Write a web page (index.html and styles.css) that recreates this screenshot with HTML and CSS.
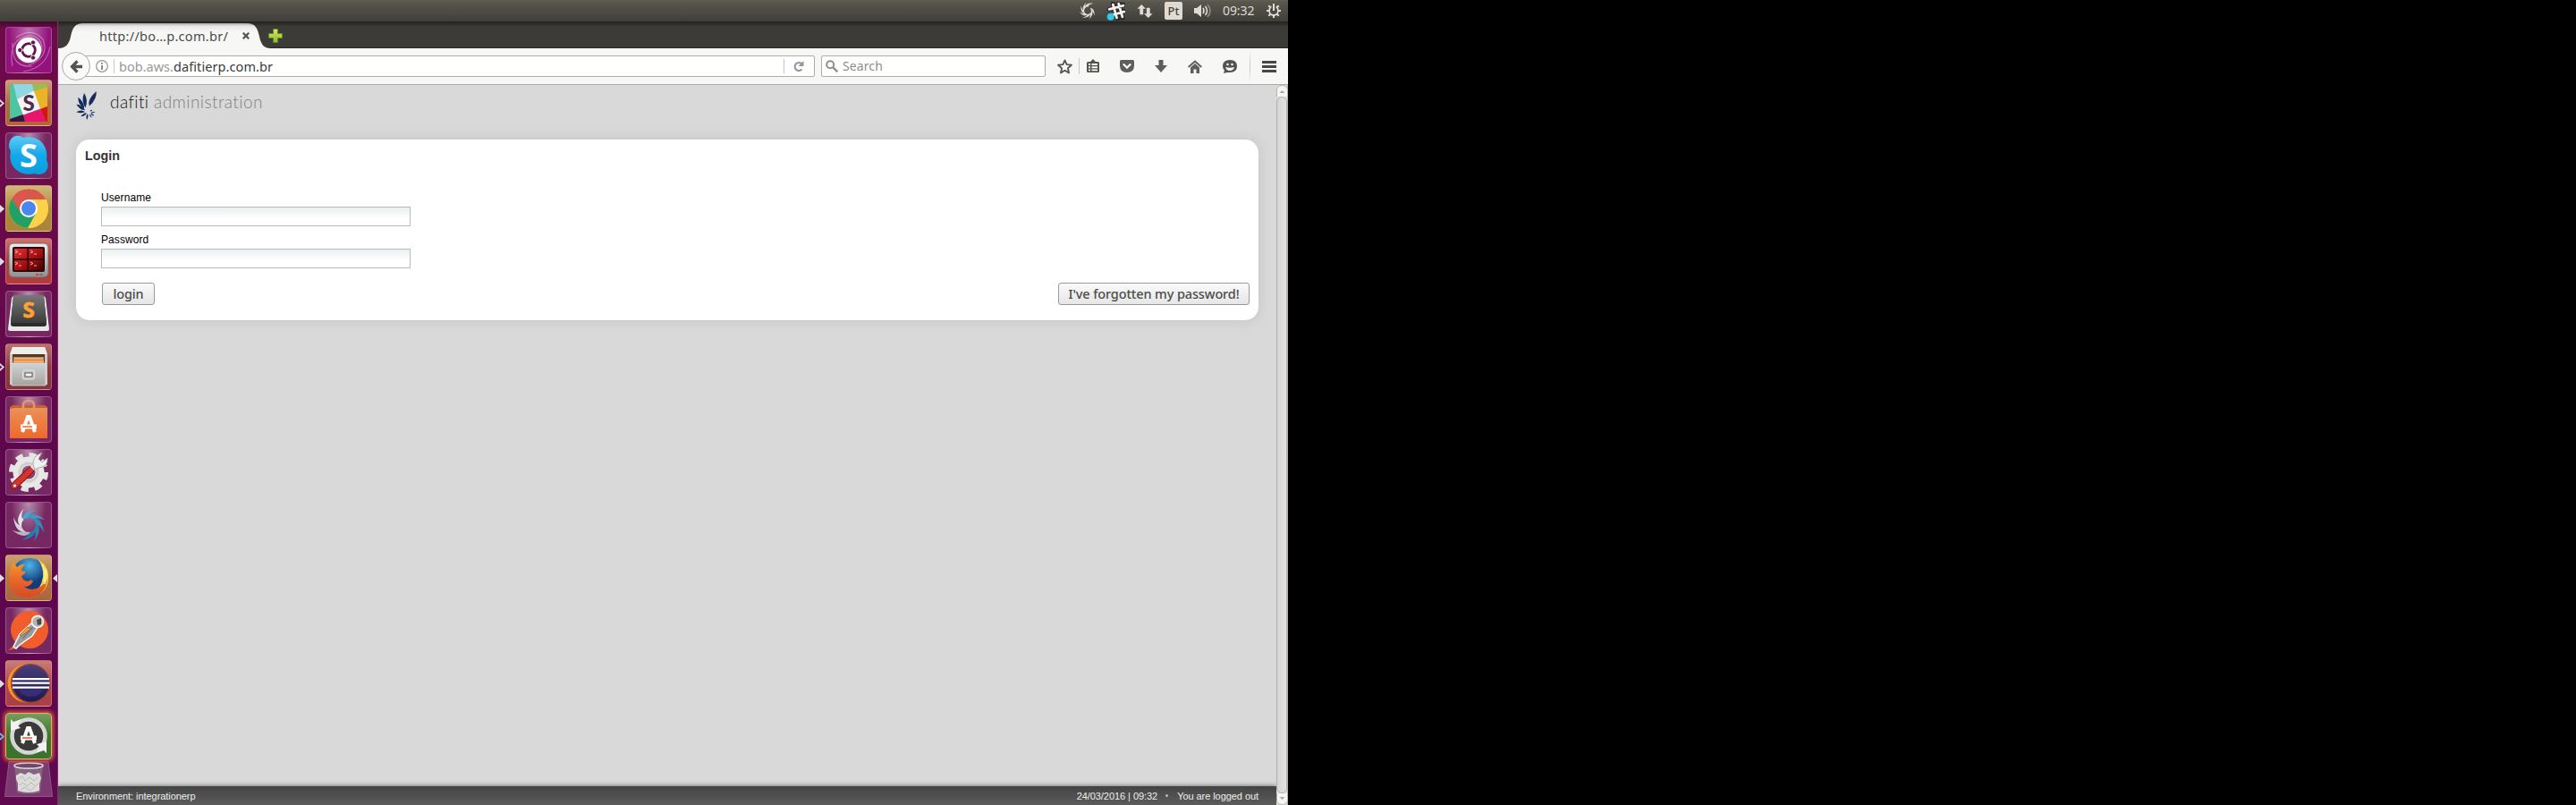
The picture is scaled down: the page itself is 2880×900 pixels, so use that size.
FILE: index.html
```html
<!DOCTYPE html>
<html lang="en">
<head>
<meta charset="utf-8">
<title>dafiti administration</title>
<link rel="stylesheet" href="styles.css">
</head>
<body>
<svg class="defs" width="0" height="0">
  <defs>
    <linearGradient id="skype" x2="0" y2="1"><stop offset="0" stop-color="#63c9f3"/><stop offset=".5" stop-color="#12a9ea"/><stop offset="1" stop-color="#0a9fdf"/></linearGradient>
    <linearGradient id="metal" x2="0" y2="1"><stop offset="0" stop-color="#ececec"/><stop offset="1" stop-color="#8f8f8f"/></linearGradient>
    <linearGradient id="drawer" x2="0" y2="1"><stop offset="0" stop-color="#d2d2d0"/><stop offset="1" stop-color="#a3a3a1"/></linearGradient>
    <linearGradient id="key" x2="0" y2="1"><stop offset="0" stop-color="#777"/><stop offset="1" stop-color="#3c3c3c"/></linearGradient>
    <linearGradient id="bag" x2="0" y2="1"><stop offset="0" stop-color="#e8925a"/><stop offset="1" stop-color="#f0682a"/></linearGradient>
    <linearGradient id="term" x2="1" y2="1"><stop offset="0" stop-color="#e0302f"/><stop offset=".55" stop-color="#a80d10"/><stop offset="1" stop-color="#3c0304"/></linearGradient>
    <radialGradient id="globe" cx=".5" cy=".2"><stop offset="0" stop-color="#4db4e6"/><stop offset="1" stop-color="#123a7c"/></radialGradient>
    <linearGradient id="fox" x2="0" y2="1"><stop offset="0" stop-color="#f39a2a"/><stop offset=".5" stop-color="#e8682a"/><stop offset="1" stop-color="#d64a25"/></linearGradient>
    <linearGradient id="ecl" x2="0" y2="1"><stop offset="0" stop-color="#473d7a"/><stop offset="1" stop-color="#1f1a4b"/></linearGradient>
    <linearGradient id="plus" x2="0" y2="1"><stop offset="0" stop-color="#dbe66a"/><stop offset="1" stop-color="#8fb72b"/></linearGradient>
    <linearGradient id="tabg" x2="0" y2="1"><stop offset="0" stop-color="#a8a7a5"/><stop offset=".12" stop-color="#e8e8e7"/><stop offset=".35" stop-color="#f7f7f5"/><stop offset="1" stop-color="#f7f7f5"/></linearGradient>
    <path id="vane" d="M-7-4Q-9-15 9-17Q-1-13 0-8Q-4-8-7-4z"/>
  </defs>
</svg>
<div class="desktop">
  <header class="panel">
    <svg class="ind swirl" viewBox="-18 -19 36 38"><g fill="#dfdbd2"><use href="#vane" transform="scale(1.1) rotate(10)"/><use href="#vane" transform="rotate(-35)"/><use href="#vane" transform="rotate(-80)"/><use href="#vane" transform="rotate(-125)"/><use href="#vane" transform="rotate(-170)"/><use href="#vane" transform="rotate(-215)"/><use href="#vane" transform="rotate(-260)"/></g></svg>
    <svg class="ind hash" viewBox="0 0 20 20"><g stroke="#2c2b28" stroke-width="5" stroke-linecap="round"><path d="M7 2l5 16M13 1l4 16M3 8l15-5M5 15l14-5"/></g><g stroke="#f5f4f2" stroke-width="2.600" stroke-linecap="round"><path d="M7 3l4 14M13 2l4 14M3 8l15-4M5 14.500l14-4"/></g><circle cx="4.500" cy="16" r="3.800" fill="#30c8ef"/></svg>
    <svg class="ind updown" viewBox="0 0 18 18"><path fill="#dfdbd2" d="M5 1l5 5H7v7H3V6H0zM13 17l-5-5h3V5h4v7h3z"/></svg>
    <span class="kbd">Pt</span>
    <svg class="ind vol" viewBox="0 0 20 18"><path fill="#dfdbd2" d="M0 6h3l5-4v14l-5-4H0z"/><g fill="none" stroke-width="1.600"><path stroke="#dfdbd2" d="M10 6q2 3 0 6M12.500 4q4 5 0 10"/><path stroke="#8f8d85" d="M15 2q6 7 0 14"/></g></svg>
    <span class="clock">09:32</span>
    <svg class="ind gear" viewBox="0 0 16 16"><circle cx="8" cy="8" r="5" fill="none" stroke="#dfdbd2" stroke-width="1.800"/><path stroke="#dfdbd2" stroke-width="2" d="M0 8h3M13 8h3M8 13v3M2.300 2.300l2.200 2.200M11.500 4.500l2.200-2.200M2.300 13.700l2.200-2.200M11.500 11.500l2.200 2.200"/><path stroke="#504e47" stroke-width="5" d="M8 1v6"/><path stroke="#dfdbd2" stroke-width="2" d="M8 0v8"/></svg>
  </header>
  <div class="work">
    <nav class="launcher">
      <div class="tile ubuntu"><svg viewBox="0 0 52 52"><g fill="none" stroke="#fff" stroke-width="1.200" opacity=".35"><path d="M8 44Q2 14 26 10Q42 10 41 28M12 12Q30 0 42 14Q50 34 26 43M20 50Q46 46 50 22M8 18Q6 46 30 44"/></g><circle cx="26" cy="26" r="14.300" fill="#fff"/><circle cx="26" cy="26" r="7.200" fill="none" stroke="#5f1750" stroke-width="3"/><path stroke="#fff" stroke-width="1.200" d="M26 26h-11M26 26l6-10M26 26l6 10"/><circle cx="26" cy="26" r="5.700" fill="#fff"/><g fill="#5f1750" stroke="#fff" stroke-width=".8"><circle cx="16.300" cy="26" r="2.600"/><circle cx="31" cy="17.500" r="2.600"/><circle cx="31" cy="34.500" r="2.600"/></g></svg></div>
      <div class="tile slack"><i class="pip hollow"></i><svg viewBox="0 0 52 52"><rect x="5" y="5" width="42" height="42" rx="2" fill="#4cc6a0"/><path fill="#8fd8e3" d="M9 5h21l2 8-19 9z"/><path fill="#9bbb58" d="M30 5h17v3l-15 5z"/><path fill="#ecb424" d="M32 13l15-5v22l-8 3z"/><path fill="#dc1212" d="M39 33l8-3v17h-2z"/><path fill="#e8156f" d="M20 39l19-6 6 14H22z"/><path fill="#3c1440" d="M5 44l15-5 2 8H5z"/><path fill="#f6f3f2" d="M13 22l19-9.500 7 20-19 7z"/><text x="26" y="34.500" text-anchor="middle" class="g-s" fill="#4c2b50">S</text></svg></div>
      <div class="tile plain"><svg viewBox="0 0 52 52"><path fill="url(#skype)" d="M4 15C4 5 13 1 20 6C36 2 49 14 46 31C51 40 44 50 33 46C16 50 2 38 6 21Q4 18 4 15z"/><text x="26" y="38.500" text-anchor="middle" class="g-skype" fill="#fff">S</text></svg></div>
      <div class="tile gold"><i class="pip"></i><svg viewBox="0 0 52 52"><circle cx="26" cy="26" r="22" fill="#fdd149"/><path fill="#d9574c" d="M7 15A22 22 0 0 1 45.500 16H26L17 32z"/><path fill="#23a063" d="M7 15A22 22 0 0 0 26 48L34 32 18 32z"/><path fill="#fdd149" d="M25 48L35 30Q38 22 32 16H45.500A22 22 0 0 1 25 48z"/><circle cx="26" cy="26" r="10" fill="#fff"/><circle cx="26" cy="26" r="8" fill="#4a86ec"/></svg></div>
      <div class="tile red"><i class="pip"></i><svg viewBox="0 0 52 52"><rect x="4" y="6" width="44" height="38" rx="5" fill="url(#metal)" stroke="#6d6d6d"/><rect x="8" y="10" width="36" height="28" rx="2" fill="#2b0909"/><path fill="url(#term)" d="M10 12h14.500v11H10zM26 12h16v11H26zM10 25h14.500v11H10zM26 25h16v11H26z"/><g fill="none" stroke="#f6c3bf" stroke-width=".9"><path d="M11 14l3 1.500-3 1.500M15 18h3M28 14l3 1.500-3 1.500M32 18h3M11 27l3 1.500-3 1.500M15 31h3M28 27l3 1.500-3 1.500M32 31h3"/></g><path fill="#e23d2d" d="M34 40h3v2h-3z"/><path fill="#777" d="M38 40h4v2h-4z"/></svg></div>
      <div class="tile plain"><svg viewBox="0 0 52 52"><path fill="#e7e7e7" d="M7 8q1-2 3-2h32q2 0 3 2l4 35q0 2-2 2H5q-2 0-2-2z"/><path fill="#2c2c2c" d="M9 6h34l3 31q0 3-3 3H9q-3 0-3-3z"/><path fill="url(#key)" d="M10 5h32q1 0 1 1l3 28q0 2-2 2H8q-2 0-2-2L9 6q0-1 1-1z"/><text x="26" y="30" text-anchor="middle" class="g-sub" fill="#ffa031" stroke="#ffa031" stroke-width=".8">S</text></svg></div>
      <div class="tile rust"><i class="pip hollow"></i><svg viewBox="0 0 52 52"><path fill="#c9c9c6" d="M8 4h36l3 9v33H5V13z"/><path fill="#ededea" d="M8 4h36l3 8H5z"/><path fill="#4a3a32" d="M8 12h36v11H8z"/><path fill="#e07f38" d="M9 15h34v7H9z"/><path stroke="#f8dab9" stroke-width="1" d="M10 17h32M9 20h34"/><path fill="url(#drawer)" stroke="#dededc" stroke-width=".8" d="M7 22h38v25H7z"/><rect x="19.500" y="30" width="13" height="10" rx="2" fill="#c4c4c2" stroke="#e6e6e4"/><rect x="22" y="33" width="8" height="4" fill="#f8f8f8" stroke="#555"/></svg></div>
      <div class="tile plain"><svg viewBox="0 0 52 52"><path fill="#c9602c" d="M5 12l3-2h36l3 2v3H5z"/><path fill="url(#bag)" d="M5 14l5-1h37v34H5z"/><path fill="none" stroke="#e8946a" stroke-width="2.500" d="M20 17v-7q0-5 6-5t6 5v7"/><path fill="none" stroke="#fff" stroke-width="4" d="M19 40l6-17h2l6 17"/><path stroke="#fff" stroke-width="5" d="M17 34h18"/><path stroke="#ee6c2e" stroke-width="1.500" d="M19 34h11"/></svg></div>
      <div class="tile plain"><svg viewBox="0 0 52 52"><circle cx="26" cy="26" r="19" fill="none" stroke="#e4e4e2" stroke-width="6" stroke-dasharray="8 6.920"/><circle cx="26" cy="26" r="12.500" fill="none" stroke="#e8e8e6" stroke-width="10"/><circle cx="26" cy="26" r="10" fill="none" stroke="#cfcfcd" stroke-width="3"/><path stroke="#8c1414" stroke-width="8" stroke-linecap="round" d="M10 41l18-17"/><path stroke="#cf3630" stroke-width="6" stroke-linecap="round" d="M10 41l18-17"/><path stroke="#e3e3e3" stroke-width="6" d="M30 22l6-6"/><path fill="#f1f1ef" stroke="#9c9c9a" stroke-width=".8" d="M31 18Q30 8 41 4L37 11l4 4 6-5Q48 20 37 21L33 23z"/><circle cx="10.500" cy="41" r="1.500" fill="#fff"/></svg></div>
      <div class="tile plain"><svg viewBox="0 0 52 52"><g transform="translate(26 26)"><use href="#vane" fill="#4aa5cb"/><use href="#vane" transform="rotate(45)" fill="#4199c2"/><use href="#vane" transform="rotate(90)" fill="#358cb8"/><use href="#vane" transform="rotate(135)" fill="#2d82ae"/><use href="#vane" transform="rotate(180)" fill="#287aa7"/><use href="#vane" transform="rotate(225)" fill="#b9b4c8"/><use href="#vane" transform="rotate(270)" fill="#d5d0da"/><use href="#vane" transform="rotate(315)" fill="#e6e3e8"/></g></svg></div>
      <div class="tile orange"><i class="pip"></i><i class="pip active"></i><svg viewBox="0 0 52 52"><circle cx="27" cy="24" r="20" fill="url(#globe)"/><path fill="#f6cf3c" d="M36 5Q50 13 48 29Q45 46 26 48Q40 40 42 25Q43 13 36 5z"/><path fill="url(#fox)" d="M9 8L13 14Q18 10 22 11Q18 14 18 18L23 19Q22 22 18 24Q19 29 25 30Q29 27 31 30Q28 36 21 36Q29 42 39 36Q45 32 47 27Q45 47 26 48Q5 48 4 27Q4 16 9 8z"/><path fill="none" stroke="#fff3a0" stroke-width="1.500" d="M41 11Q46 19 43 30M45 16Q47 24 44 33"/></svg></div>
      <div class="tile plain"><svg viewBox="0 0 52 52"><circle cx="27" cy="25" r="21" fill="#f15d2b"/><path fill="#eb5328" d="M3 48l8-7 2 5z"/><path fill="#9b9b9b" stroke="#fff" stroke-width="1.500" d="M9 44l7-14L29 18l8 3-7 11-14 10-4 4z"/><path fill="#f69a2d" stroke="#555" stroke-width=".6" d="M16 31l9-9 4 2-11 8z"/><path stroke="#777" stroke-width="1.200" d="M19 35l12-13"/><circle cx="36" cy="16" r="6.500" fill="#b3b3b3" stroke="#fff" stroke-width="1.500"/><path fill="#4a4a4a" d="M35 14l5-2v7l-4 1z"/></svg></div>
      <div class="tile crimson"><i class="pip"></i><svg viewBox="0 0 52 52"><circle cx="24" cy="26" r="21.500" fill="#f7942a"/><circle cx="28" cy="26" r="22" fill="#8e3f3b"/><circle cx="28.500" cy="26" r="20.500" fill="url(#ecl)"/><path fill="#fff" d="M8 20h41v2.200H8zM7.500 24.500h42v2.300h-42zM8 29.500h41v2.200H8z"/><path fill="#3d3288" opacity=".7" d="M15 33h27q-4 8-13.500 8T15 33z"/></svg></div>
      <div class="tile green"><i class="pip hollow blue"></i><svg viewBox="0 0 52 52"><circle cx="26" cy="26" r="18.500" fill="#3a3a38" stroke="#d6d6d4" stroke-width="4.500"/><path fill="#f2f2f0" d="M6 20V7l3 3 9-3-4 7 3 3zM46 32v13l-3-3-9 3 4-7-3-3z"/><path fill="none" stroke="#fff" stroke-width="4" d="M19 34l6-17h2l6 17"/><path stroke="#fff" stroke-width="5" d="M17 28h18"/><path stroke="#ee5c2e" stroke-width="1.600" d="M19 28h11"/></svg></div>
      <div class="trash"><svg viewBox="0 0 54 40"><path fill="#7c3a70" stroke="#8f5685" d="M5 .5h44l4.500 39H.5z"/><path fill="#8f7d90" opacity=".6" d="M11 5h32l-3 30q-13 3-26 0z"/><ellipse cx="27" cy="5" rx="16" ry="3" fill="#6d4a6b" stroke="#e0dce0" stroke-width="1.500"/><path fill="#dcdcda" d="M13 16l5-3 5 2 4-3 6 3 6-2 2 6-2 6v8q-12 4-24 0v-8l-2-5z"/><path fill="none" stroke="#b9b9b7" stroke-width="1" d="M15 20l5-3 3 5 5-4 5 4 4-4M16 27l5-3 4 4 5-4 4 4 4-3M18 32l5-3 5 4 6-4"/></svg></div>
    </nav>
    <main class="browser">
      <div class="tabstrip">
        <div class="tab">
          <svg class="tabshape" viewBox="0 0 240 28" preserveAspectRatio="none"><path fill="url(#tabg)" d="M0 28C8 28 12 24 14 15C16 5 19 0 28 0H211C220 0 223 5 225 15C227 24 230 28 238 28z"/></svg>
          <span class="tabtitle">http://bo…p.com.br/</span>
          <svg class="tabclose" viewBox="0 0 8 8"><path stroke="#55534f" stroke-width="2.200" d="M.7.7l6.600 6.600M7.300.7L.7 7.300"/></svg>
        </div>
        <svg class="newtab" viewBox="0 0 16 16"><path fill="url(#plus)" stroke="#5e8a26" d="M5.500.5h5v5h5v5h-5v5h-5v-5h-5v-5h5z"/></svg>
      </div>
      <div class="toolbar">
        <div class="back"><svg viewBox="0 0 16 16"><path fill="none" stroke="#55534f" stroke-width="3.600" d="M9 1.500L2.800 8 9 14.500M3.500 8H15"/></svg></div>
        <div class="urlbar">
          <svg class="info" viewBox="0 0 14 14"><circle cx="7" cy="7" r="6.300" fill="none" stroke="#969696" stroke-width="1.200"/><path stroke="#8a8a8a" stroke-width="2" d="M7 6v5M7 3v1.800"/></svg>
          <span class="vline"></span>
          <span class="sub">bob.aws.</span><span class="host">dafitierp.com.br</span>
          <span class="vline reloadline"></span>
          <svg class="reload" viewBox="0 0 12 12"><path fill="none" stroke="#8d979d" stroke-width="2" d="M9.500 3.500A4.500 4.500 0 1 0 9.500 9.500"/><path fill="#8d979d" d="M11.500 0v6h-6z"/></svg>
        </div>
        <div class="search"><svg viewBox="0 0 14 14"><circle cx="5.200" cy="5.200" r="4" fill="none" stroke="#8f8f8f" stroke-width="2"/><path stroke="#8f8f8f" stroke-width="2.400" d="M8.300 8.300l5 5"/></svg><span>Search</span></div>
        <svg class="tb star" viewBox="0 0 16 16"><path fill="none" stroke="#55534f" stroke-width="1.700" stroke-linejoin="round" d="M8 1.300l2 4.500 5 .5-3.800 3.300 1.100 5L8 12l-4.300 2.600 1.100-5L1 6.300l5-.5z"/></svg>
        <span class="vline starline"></span>
        <svg class="tb clip" viewBox="0 0 14 16"><path fill="#55534f" d="M1.500 3H4l3-3 3 3h2.500Q14 3 14 4.500v9q0 1.500-1.500 1.500h-11Q0 15 0 13.500v-9Q0 3 1.500 3z"/><path fill="#f7f7f5" d="M2 5h2v2H2zM5.500 5H12v2H5.500zM2 8.300h2v2H2zM5.500 8.300H12v2H5.500zM2 11.500h2v1.800H2zM5.500 11.500H12v1.800H5.500z"/></svg>
        <svg class="tb pocket" viewBox="0 0 16 14"><path fill="#5f5e5b" d="M1.500 0h13Q16 0 16 1.500V6q0 8-8 8T0 6V1.500Q0 0 1.500 0z"/><path fill="none" stroke="#f7f7f5" stroke-width="2.200" d="M3.800 4.500L8 8.600l4.200-4.100"/></svg>
        <svg class="tb down" viewBox="0 0 14 14"><path fill="#5f5e5b" d="M4.500 0h5v6H14l-7 8-7-8h4.500z"/></svg>
        <svg class="tb home" viewBox="0 0 16 15"><path fill="none" stroke="#5f5e5b" stroke-width="2" d="M.7 8L8 1.500 15.300 8"/><path fill="#5f5e5b" d="M3 8.500l5-4.500 5 4.500V15H9.500v-4.500h-3V15H3z"/></svg>
        <svg class="tb smile" viewBox="0 0 16 15"><path fill="#55534f" d="M8 0Q16 0 16 7t-8 7H5l-4 1 1-3.500Q0 10 0 7 0 0 8 0z"/><g fill="#f7f7f5"><circle cx="5.500" cy="5" r="1.300"/><circle cx="10.500" cy="5" r="1.300"/><path d="M3 8q5 1.500 10 0-1 4-5 4T3 8z"/></g></svg>
        <span class="vline menuline"></span>
        <svg class="tb menu" viewBox="0 0 16 13"><path fill="#484744" d="M0 0h16v3H0zM0 5h16v3H0zM0 10h16v3H0z"/></svg>
      </div>
      <div class="viewport">
        <div class="page">
          <div class="brand">
            <svg class="logo" viewBox="0 0 24 34"><g fill="#142c5e"><path d="M23 0Q24 9 15 17Q12 10 23 0z"/><path d="M9 2Q14 10 10.500 19Q5 11 9 2z"/><path d="M2 7Q9 12 9 20Q2 16 2 7z"/><path d="M0 15Q7 16 10 22Q4 22 0 15z"/><path d="M0 24Q6 20.500 10 24Q5 26 0 24z"/><path d="M5 29Q8 25 12 25Q10 29 5 29z"/><path d="M12 33Q10.500 28 13 26Q14.500 29 12 33z"/><path d="M18 31Q15 29 15 26Q18 28 18 31z"/></g><path fill="none" stroke="#142c5e" stroke-width="1.200" d="M17 26l3 2M17 25l4-1M16 23l2-1"/></svg>
            <h1><b>dafiti</b> <span>administration</span></h1>
          </div>
          <form class="card">
            <h2>Login</h2>
            <div class="fields">
              <label for="user">Username</label><input id="user" type="text">
              <label for="pass">Password</label><input id="pass" type="password">
            </div>
            <div class="actions"><button type="button" class="login">login</button><button type="button" class="forgot">I've forgotten my password!</button></div>
          </form>
          <footer><span class="env">Environment: integrationerp</span><span class="date">24/03/2016 | 09:32</span><i class="dot"></i><span class="state">You are logged out</span></footer>
        </div>
        <div class="scroll">
          <svg viewBox="0 0 13 13"><path fill="#f5f5f4" stroke="#b5b3b0" d="M.5 13V6q0-5.500 6-5.500t6 5.500v7"/><path fill="#a8a6a3" d="M3.500 9l3-3 3 3z"/></svg>
          <div class="thumb"></div>
          <svg viewBox="0 0 13 13"><path fill="#f5f5f4" stroke="#b5b3b0" d="M.5 0v7q0 5.500 6 5.500t6-5.500V0"/><path fill="#a8a6a3" d="M3.500 4h6l-3 3z"/></svg>
        </div>
      </div>
    </main>
  </div>
</div>
</body>
</html>
```
FILE: styles.css
```css
* { box-sizing: border-box; }
body { margin: 0; background: #000; font-family: "Liberation Sans", Arial, sans-serif; overflow: hidden; }
svg { display: block; flex: none; }
.defs { position: absolute; }
.desktop { width: 1440px; height: 900px; display: flex; flex-direction: column; }

.panel { height: 24px; flex: none; display: flex; align-items: center; justify-content: flex-end; padding-right: 8px; background: linear-gradient(#646150 0, #59574f 8%, #3f3e39); }
.swirl { width: 18px; height: 20px; margin-right: 12px; }
.hash { width: 21px; height: 21px; margin-right: 13px; }
.updown { width: 18px; height: 17px; margin-right: 13px; }
.kbd { width: 20px; height: 20px; margin-right: 13px; border-radius: 2px; background: #dfdbd2; color: #45443f; font: 500 13px/20px "Noto Sans", sans-serif; text-align: center; }
.vol { width: 20px; height: 18px; margin-right: 12px; }
.clock { width: 37px; margin-right: 12px; color: #dfdbd2; font: 14px/24px "Noto Sans", sans-serif; letter-spacing: -.1px; white-space: nowrap; }
.gear { width: 16px; height: 16px; }

.work { flex: 1; display: flex; min-height: 0; }
.launcher { width: 65px; flex: none; padding: 6px 0 0 6px; display: flex; flex-direction: column; gap: 7px; background: linear-gradient(#3d0b2d 0, #6b0c49 8px, #6b0b4a 20%, #5c064c 60%, #600850); border-right: 1px solid #8c2d62; }
.tile { position: relative; width: 52px; height: 52px; flex: none; border-radius: 4px; border: 1px solid rgba(255,255,255,.24); background: radial-gradient(ellipse at 50% 0, rgba(255,255,255,.5), rgba(255,255,255,.06) 55%), #6f1a58; }
.tile svg { width: 52px; height: 52px; margin: -1px; }
.tile.ubuntu { background: radial-gradient(ellipse at 50% 0, rgba(255,255,255,.4), rgba(255,255,255,0) 65%), #93127b; }
.tile.slack { background: linear-gradient(#d09b77, #b3693f 50%, #b2653b); }
.tile.gold { background: linear-gradient(#d2b77c, #b0893c 50%, #a98536); }
.tile.red { background: linear-gradient(#cf7272, #b43c3c 45%, #b33b3b); }
.tile.rust { background: linear-gradient(#ba7270, #923a40 50%, #863437); }
.tile.orange { background: linear-gradient(#c9a073, #b57543 50%, #ab653c); }
.tile.crimson { background: linear-gradient(#c97e78, #b34549 50%, #ab3e42); }
.tile.green { background: linear-gradient(#759e5b, #3c7530 50%, #3a732e); border-color: #f1a870; box-shadow: 0 0 4px 2px #d65b35; }
.pip { position: absolute; left: -7px; top: 21px; width: 5px; height: 9px; background: #dedede; clip-path: polygon(0 0, 100% 50%, 0 100%); }
.pip.hollow { clip-path: polygon(0 0, 100% 50%, 0 100%, 0 72%, 50% 50%, 0 28%); }
.pip.blue { background: #74b7e8; }
.pip.active { left: 52px; clip-path: polygon(100% 0, 0 50%, 100% 100%); }
.g-s { font: 900 24px Lato, sans-serif; }
.g-skype { font: bold 36px "Open Sans", sans-serif; }
.g-sub { font: bold 24px "Open Sans", sans-serif; }
.trash { width: 54px; height: 40px; margin: -5px 0 0 -1px; }
.trash svg { width: 54px; height: 40px; }

.browser { flex: 1; display: flex; flex-direction: column; min-width: 0; }
.tabstrip { height: 30px; flex: none; display: flex; align-items: flex-end; background: linear-gradient(#22211f, #3c3b37 20%, #3c3b37 95%, #2a2927 96%); }
.tab { position: relative; width: 235px; height: 28px; display: flex; align-items: center; }
.tabshape { position: absolute; left: 0; top: 0; width: 240px; height: 28px; }
.tabtitle { position: relative; width: 145px; margin-left: 46px; color: #4c4c4c; font: 14.5px/26px "Noto Sans", sans-serif; letter-spacing: .3px; white-space: nowrap; }
.tabclose { position: relative; width: 8px; height: 8px; margin-left: 15px; }
.newtab { width: 16px; height: 16px; margin: 0 0 6px; }
.toolbar { height: 41px; flex: none; display: flex; align-items: center; background: #f7f7f5; border-bottom: 1px solid #acaba7; }
.back { position: relative; z-index: 1; width: 32px; height: 32px; margin-left: 4px; flex: none; border: 1px solid #aaa8a3; border-radius: 50%; background: #fafaf9; display: flex; align-items: center; justify-content: center; }
.back svg { width: 15px; height: 15px; }
.urlbar { width: 820px; height: 24px; margin-left: -10px; flex: none; display: flex; align-items: center; border: 1px solid #aeaca6; border-radius: 2px; background: #fff; padding-left: 15px; font: 14.5px/22px "Noto Sans", sans-serif; white-space: nowrap; }
.info { width: 14px; height: 14px; margin-right: 6px; }
.vline { width: 1px; height: 16px; background: #c9c8c5; flex: none; }
.sub { width: 61px; margin-left: 5px; color: #999; }
.host { color: #3c3c3c; letter-spacing: .08px; }
.reloadline { margin-left: auto; }
.reload { width: 12px; height: 12px; margin: 0 11px 0 10px; }
.search { width: 251px; height: 24px; margin-left: 7px; flex: none; display: flex; align-items: center; border: 1px solid #aeaca6; border-radius: 2px; background: #fff; color: #8f8f8f; font: 14px/22px "Noto Sans", sans-serif; letter-spacing: .1px; }
.search svg { width: 14px; height: 14px; margin: 0 5px 1px 4px; }
.star { width: 17px; height: 17px; margin-left: 13px; }
.starline { height: 18px; margin: 0 8px 0 7px; }
.clip { width: 14px; height: 16px; }
.pocket { width: 16px; height: 14px; margin-left: 23px; }
.down { width: 14px; height: 14px; margin-left: 23px; }
.home { width: 16px; height: 15px; margin-left: 23px; }
.smile { width: 16px; height: 15px; margin-left: 23px; }
.menuline { height: 36px; margin: 0 13px 0 14px; background: linear-gradient(#f7f7f5, #ccc 40%, #ccc 60%, #f7f7f5); }
.menu { width: 16px; height: 13px; }

.viewport { flex: 1; display: flex; min-height: 0; }
.page { flex: 1; display: flex; flex-direction: column; background: #d9d9d9; }
.brand { display: flex; height: 61px; padding: 7px 0 0 20px; }
.logo { width: 24px; height: 33px; }
h1 { margin: 0 0 0 14px; font: 300 19px/24px Lato, sans-serif; letter-spacing: .42px; color: #808080; white-space: nowrap; }
h1 b { font-weight: 300; color: #111; }
.card { height: 202px; margin: 0 20px; border-radius: 15px; background: #fff; box-shadow: 0 0 16px rgba(0,0,0,.1); }
h2 { margin: 0; padding: 9px 0 0 10px; font: bold 14.300px/18px "Liberation Sans", sans-serif; color: #333; }
.fields { width: 374px; padding: 30px 0 0 28px; display: flex; flex-direction: column; }
label { height: 18px; font-size: 12px; line-height: 16px; letter-spacing: .08px; color: #000; }
.fields input { width: 346px; height: 22px; margin: 0 0 7px; border: 1px solid #bababa; background: linear-gradient(#e9f0f0, #fff 60%); padding: 0; }
.actions { display: flex; justify-content: space-between; padding: 9px 10px 0 29px; }
button { height: 25px; padding: 0 0 1px; border: 1px solid #9a9a9a; border-radius: 3px; background: linear-gradient(#fafafa, #e6e6e6); color: #4c4c4c; font: 500 14.5px/20px "Noto Sans", sans-serif; letter-spacing: -.12px; white-space: nowrap; }
.login { width: 59px; }
.forgot { width: 214px; }
footer { height: 21px; margin-top: auto; display: flex; align-items: center; padding: 0 20px; background: linear-gradient(#444, #5c5c5c); box-shadow: 0 0 5px rgba(0,0,0,.6); color: #eee; font-size: 11px; line-height: 20px; letter-spacing: -.06px; white-space: nowrap; clip-path: inset(-6px 0 0 0); }
.date { margin-left: auto; }
.dot { width: 3px; height: 3px; margin: 0 10px 0 9px; border-radius: 50%; background: #bbb; }
.scroll { width: 13px; display: flex; flex-direction: column; background: #dfdedc; border-right: 1px solid #b5b3b0; }
.scroll svg { width: 13px; height: 13px; }
.thumb { flex: 1; border: 1px solid #b3b1ad; border-radius: 6px; background: linear-gradient(90deg, #d7d5d2, #e3e2e0); }
```
